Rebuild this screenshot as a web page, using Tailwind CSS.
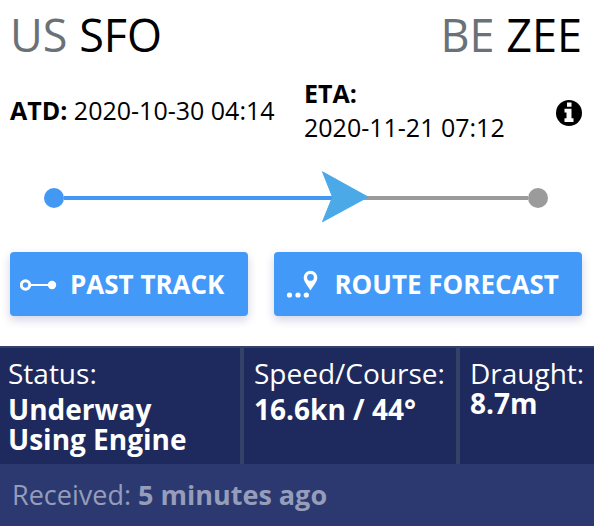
<!DOCTYPE html>
<html lang="en">
<head>
<meta charset="utf-8">
<meta name="viewport" content="width=device-width, initial-scale=1">
<title>Voyage</title>
<script src="https://cdn.jsdelivr.net/npm/@tailwindcss/browser@4"></script>
</head>
<body class="bg-white font-['Open_Sans','Noto_Sans',sans-serif] text-black">
<main>
  <header class="flex justify-between px-3 pt-2.5 pb-px pl-2.5 text-[45px] leading-[49px]">
    <h1><span class="text-[#6a7278]">US</span> SFO</h1>
    <h1><span class="text-[#6a7278]">BE</span> ZEE</h1>
  </header>

  <section class="flex items-center justify-between px-3 pt-4 pl-2.5 text-[25px] leading-[34px]">
    <p class="w-[294px]"><b>ATD:</b> 2020-10-30 04:14</p>
    <p class="flex-1"><b>ETA:</b><br>2020-11-21 07:12</p>
    <button type="button" class="pt-1.5" aria-label="Voyage information">
      <svg class="block size-[26px]" viewBox="0 0 26 26">
        <circle cx="13" cy="13" r="13"/>
        <path fill="#fff" d="M11 2.500h4.500v4.300h-4.500zM8.500 8.800h7v9.400h2v3.800h-9v-3.800h2v-5.600h-2z"/>
      </svg>
    </button>
  </section>

  <div class="flex items-center pt-7 pr-[46px] pb-7 pl-11" role="img" aria-label="Voyage progress">
    <span class="size-5 rounded-full bg-[#4398f4]"></span>
    <span class="h-1 flex-[269] bg-[#4398f4]"></span>
    <svg class="-ml-3 h-[52px] w-12 overflow-visible" viewBox="0 0 48 52">
      <path fill="#9b9b9b" d="M40 24h9v4h-9z"/>
      <path fill="#4ba9e8" stroke="#4ba9e8" stroke-linejoin="round" d="M1.500 -.2L47 25 1.500 49.700 11.500 25z"/>
    </svg>
    <span class="h-1 flex-[159] bg-[#9b9b9b]"></span>
    <span class="size-5 rounded-full bg-[#9b9b9b]"></span>
  </div>

  <div class="flex gap-[26px] px-3 pb-[30px] pl-2.5 text-[26px] leading-[34px] font-bold text-white">
    <button type="button" class="flex h-16 flex-[238] items-center gap-3 rounded bg-[#4399f8] pl-2.5 whitespace-nowrap shadow-[0_4px_10px_rgba(30,42,120,0.2)]">
      <svg class="h-4 w-[38px]" viewBox="0 0 38 16" fill="none" stroke="#fff">
        <circle cx="5.500" cy="9" r="4.200" stroke-width="3"/>
        <path d="M11 9h18" stroke-width="2"/>
        <circle cx="32" cy="9" r="4.200" fill="#fff" stroke="none"/>
      </svg>
      PAST TRACK
    </button>
    <button type="button" class="flex h-16 flex-[308] items-center gap-3 rounded bg-[#4399f8] pl-3 whitespace-nowrap shadow-[0_4px_10px_rgba(30,42,120,0.2)]">
      <svg class="h-7 w-9" viewBox="0 0 36 28" fill="#fff">
        <circle cx="3.500" cy="25" r="2.600"/>
        <circle cx="12" cy="25" r="2.600"/>
        <circle cx="20.300" cy="25" r="2.600"/>
        <path fill-rule="evenodd" d="M24.500 .8a6.800 6.800 0 0 1 6.800 6.800c0 4.500-4 8-6.800 13-2.800-5-6.800-8.500-6.800-13a6.800 6.800 0 0 1 6.800-6.800zm0 3.200a3.400 3.400 0 1 0 0 6.800 3.400 3.400 0 0 0 0-6.800z"/>
      </svg>
      ROUTE FORECAST
    </button>
  </div>

  <footer class="bg-[#2b3970] text-white">
    <dl class="grid grid-cols-[244fr_216fr_134fr] border-t-2 border-[#334267] bg-[#1e2a5e] text-[28px] leading-[30px] whitespace-nowrap">
      <div class="flex flex-col gap-1.5 border-r-4 border-[#334267] pt-2.5 pb-2.5 pl-2">
        <dt>Status:</dt>
        <dd class="font-bold">Underway<br>Using Engine</dd>
      </div>
      <div class="flex flex-col gap-1.5 border-r-4 border-[#334267] pt-2.5 pl-2.5">
        <dt>Speed/Course:</dt>
        <dd class="font-bold">16.6kn / 44°</dd>
      </div>
      <div class="pt-2.5 pl-2.5">
        <dt>Draught:</dt>
        <dd class="font-bold">8.7m</dd>
      </div>
    </dl>
    <p class="px-3 py-4 text-[27px] leading-[30px] text-[#959dbb]">Received: <b>5 minutes ago</b></p>
  </footer>
</main>
</body>
</html>
